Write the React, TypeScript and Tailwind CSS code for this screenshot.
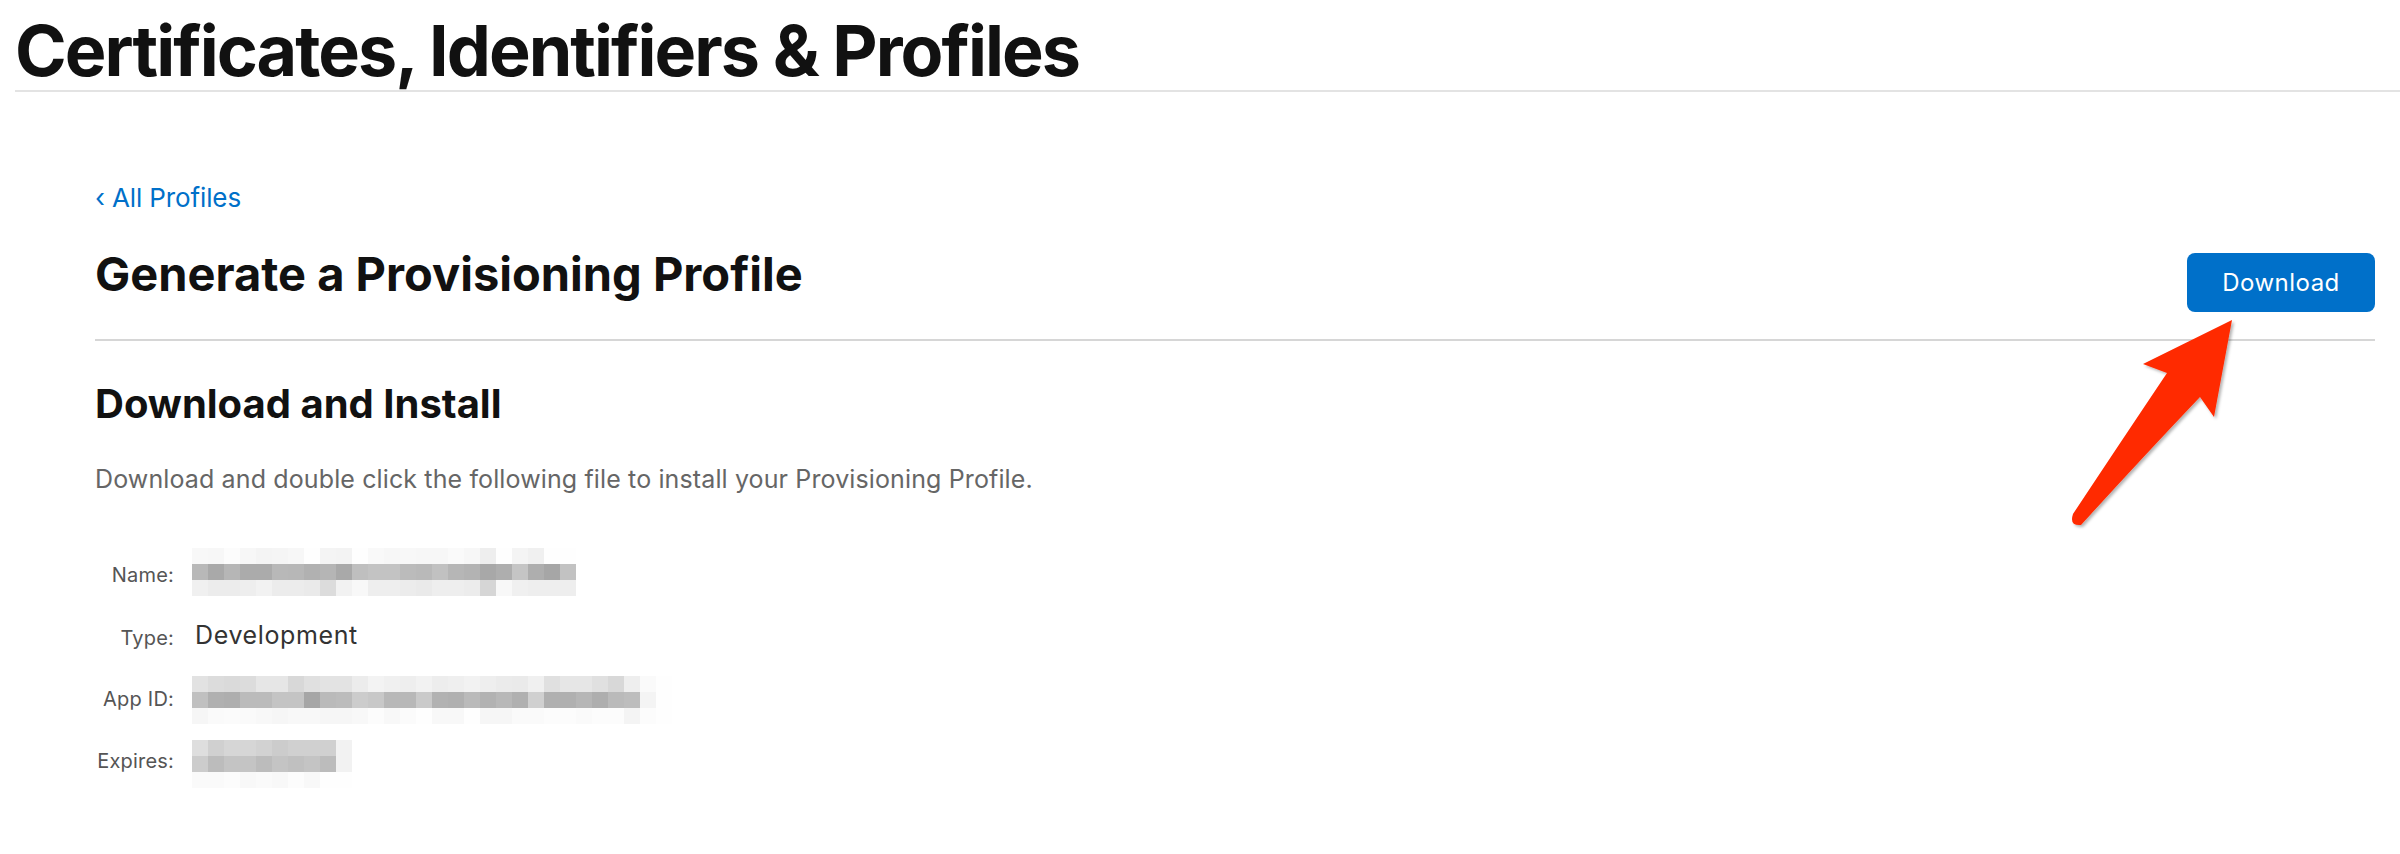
import React from "react";

const nameRows = [
  ["f8", "f7", "fc", "f7", "f4", "f5", "f7", "fe", "f4", "f3", "fe", "f9", "f7", "f8", "f7", "f7", "fa", "f7", "ee", "fe", "f4", "f0", "fe", "fe"],
  ["b8", "a9", "b6", "ab", "ab", "b8", "b7", "b1", "b5", "a9", "bf", "c3", "c3", "bb", "b9", "c1", "b6", "b3", "a8", "ae", "c5", "ae", "a6", "c2"],
  ["f0", "ec", "ec", "ee", "f2", "ec", "ec", "ea", "dc", "f2", "f8", "ee", "ee", "ec", "ea", "ee", "ee", "ec", "d6", "f8", "f0", "ee", "ee", "ee"],
];

const appIdRows = [
  ["e2", "dc", "da", "dc", "e6", "e6", "d8", "e0", "e3", "e3", "ec", "f3", "f0", "ee", "f2", "ed", "ef", "f2", "ee", "eb", "ea", "f0", "e0", "e6", "e6", "e0", "d8", "ee", "fa", "fe"],
  ["c0", "b0", "ae", "bb", "bb", "c4", "c4", "a6", "ba", "bc", "cc", "c8", "b8", "b8", "ca", "b2", "b0", "ba", "b2", "b8", "b0", "d0", "b0", "b0", "b6", "ae", "ba", "bd", "f4", "fe"],
  ["f6", "fa", "fb", "fa", "f8", "f6", "f8", "f8", "f6", "f6", "f8", "fc", "f8", "fb", "fe", "f8", "f8", "fe", "f6", "f6", "fa", "fa", "fc", "fc", "fa", "fc", "fc", "f4", "fc", "fe"],
];

const expiresRows = [
  ["de", "d0", "d6", "d6", "d2", "cc", "d0", "d0", "d0", "f2"],
  ["cc", "bc", "c4", "c4", "bc", "c4", "c0", "c4", "bc", "f2"],
  ["fa", "fa", "fc", "f8", "fa", "f8", "fc", "f8", "fe", "fe"],
];

// blurred-out value: a mosaic of 16px grey cells
const Mosaic = ({ rows }: { rows: string[][] }) => (
  <div className="flex flex-col">
    {rows.map((row, i) => (
      <div key={i} className="flex">
        {row.map((g, j) => (
          <div key={j} className="w-4 h-4" style={{ backgroundColor: `#${g}${g}${g}` }} />
        ))}
      </div>
    ))}
  </div>
);

const Label = ({ children }: { children: React.ReactNode }) => (
  <div className="w-[79px] shrink-0 text-right text-[20px] leading-[20px] tracking-[0.01em] text-[#555]">{children}</div>
);

const Arrow = () => (
  <svg className="absolute left-0 top-0 pointer-events-none" width="2400" height="854" viewBox="0 0 2400 854">
    <defs>
      <filter id="sh" x="-20%" y="-20%" width="140%" height="140%">
        <feDropShadow dx="2" dy="2" stdDeviation="1.5" floodColor="#000" floodOpacity="0.3" />
      </filter>
    </defs>
    <path
      d="M2232 320 L2143 364 L2167 373 Q2118 446 2073 514 Q2069 526 2081 525 Q2142 458 2200 397 L2214 417 Z"
      fill="#ff2a00"
      filter="url(#sh)"
    />
  </svg>
);

export default function App() {
  return (
    <div className="relative min-h-screen bg-white font-['Inter',sans-serif] text-[#1d1d1f]">
      <h1 className="pl-[15px] pt-[16px] text-[70px] font-bold leading-none tracking-[-0.028em] text-[#111]">
        Certificates, Identifiers &amp; Profiles
      </h1>
      <div className="ml-[15px] mt-[4px] h-[2px] bg-[#e3e3e3]" />

      <main className="pl-[95px] pr-[25px]">
        <a href="#" className="mt-[90px] block text-[26px] leading-[32px] tracking-[-0.005em] text-[#0070c9]">
          ‹ All Profiles
        </a>

        <div className="mt-[36px] flex items-start justify-between">
          <h2 className="text-[47px] font-bold leading-none text-[#111]">Generate a Provisioning Profile</h2>
          <button className="mt-[3px] h-[59px] w-[188px] rounded-[8px] bg-[#0070c9] text-[24px] tracking-[0.02em] text-white">
            Download
          </button>
        </div>

        <div className="mt-[27px] h-[2px] bg-[#d6d6d6]" />

        <h3 className="mt-[43px] text-[40px] font-bold leading-none text-[#111]">Download and Install</h3>
        <p className="mt-[43px] text-[25px] leading-none tracking-[0.005em] text-[#666]">
          Download and double click the following file to install your Provisioning Profile.
        </p>

        <div className="mt-[56px] flex flex-col">
          <div className="flex items-start gap-[18px]">
            <div className="pt-[17px]">
              <Label>Name:</Label>
            </div>
            <Mosaic rows={nameRows} />
          </div>
          <div className="mt-[27px] flex items-start gap-[18px]">
            <div className="pt-[5px]">
              <Label>Type:</Label>
            </div>
            <div className="ml-[3px] text-[25px] leading-[25px] tracking-[0.025em] text-[#333]">Development</div>
          </div>
          <div className="mt-[28px] flex items-start gap-[18px]">
            <div className="pt-[13px]">
              <Label>App ID:</Label>
            </div>
            <Mosaic rows={appIdRows} />
          </div>
          <div className="mt-[16px] flex items-start gap-[18px]">
            <div className="pt-[11px]">
              <Label>Expires:</Label>
            </div>
            <Mosaic rows={expiresRows} />
          </div>
        </div>
      </main>

      <Arrow />
    </div>
  );
}
